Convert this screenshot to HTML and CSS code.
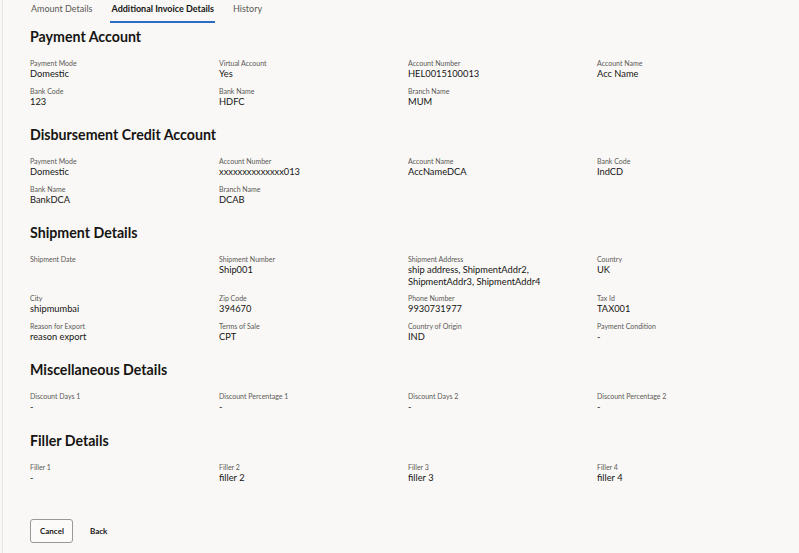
FILE: index.html
```html
<!DOCTYPE html>
<html lang="en">
<head>
    <meta charset="UTF-8">
    <meta name="viewport" content="width=device-width, initial-scale=1.0">
    <title>Invoice Details</title>
    <link rel="stylesheet" href="styles.css">
</head>
<body>
<div class="page">
    <div class="tabs">
        <a class="tab">Amount Details</a>
        <a class="tab active">Additional Invoice Details</a>
        <a class="tab">History</a>
    </div>

    <!-- Payment account -->
    <section class="section">
        <h2>Payment Account</h2>
        <div class="grid">
            <div class="field"><span class="label">Payment Mode</span><span class="value">Domestic</span></div>
            <div class="field"><span class="label">Virtual Account</span><span class="value">Yes</span></div>
            <div class="field"><span class="label">Account Number</span><span class="value">HEL0015100013</span></div>
            <div class="field"><span class="label">Account Name</span><span class="value">Acc Name</span></div>
            <div class="field"><span class="label">Bank Code</span><span class="value">123</span></div>
            <div class="field"><span class="label">Bank Name</span><span class="value">HDFC</span></div>
            <div class="field"><span class="label">Branch Name</span><span class="value">MUM</span></div>
        </div>
    </section>

    <!-- Disbursement credit account -->
    <section class="section">
        <h2>Disbursement Credit Account</h2>
        <div class="grid">
            <div class="field"><span class="label">Payment Mode</span><span class="value">Domestic</span></div>
            <div class="field"><span class="label">Account Number</span><span class="value">xxxxxxxxxxxxxx013</span></div>
            <div class="field"><span class="label">Account Name</span><span class="value">AccNameDCA</span></div>
            <div class="field"><span class="label">Bank Code</span><span class="value">IndCD</span></div>
            <div class="field"><span class="label">Bank Name</span><span class="value">BankDCA</span></div>
            <div class="field"><span class="label">Branch Name</span><span class="value">DCAB</span></div>
        </div>
    </section>

    <!-- Shipment -->
    <section class="section">
        <h2>Shipment Details</h2>
        <div class="grid">
            <div class="field"><span class="label">Shipment Date</span><span class="value"></span></div>
            <div class="field"><span class="label">Shipment Number</span><span class="value">Ship001</span></div>
            <div class="field"><span class="label">Shipment Address</span><span class="value">ship address, ShipmentAddr2, ShipmentAddr3, ShipmentAddr4</span></div>
            <div class="field"><span class="label">Country</span><span class="value">UK</span></div>
            <div class="field"><span class="label">City</span><span class="value">shipmumbai</span></div>
            <div class="field"><span class="label">Zip Code</span><span class="value">394670</span></div>
            <div class="field"><span class="label">Phone Number</span><span class="value">9930731977</span></div>
            <div class="field"><span class="label">Tax Id</span><span class="value">TAX001</span></div>
            <div class="field"><span class="label">Reason for Export</span><span class="value">reason export</span></div>
            <div class="field"><span class="label">Terms of Sale</span><span class="value">CPT</span></div>
            <div class="field"><span class="label">Country of Origin</span><span class="value">IND</span></div>
            <div class="field"><span class="label">Payment Condition</span><span class="value">-</span></div>
        </div>
    </section>

    <!-- Misc -->
    <section class="section">
        <h2>Miscellaneous Details</h2>
        <div class="grid">
            <div class="field"><span class="label">Discount Days 1</span><span class="value">-</span></div>
            <div class="field"><span class="label">Discount Percentage 1</span><span class="value">-</span></div>
            <div class="field"><span class="label">Discount Days 2</span><span class="value">-</span></div>
            <div class="field"><span class="label">Discount Percentage 2</span><span class="value">-</span></div>
        </div>
    </section>

    <!-- Fillers -->
    <section class="section">
        <h2>Filler Details</h2>
        <div class="grid">
            <div class="field"><span class="label">Filler 1</span><span class="value">-</span></div>
            <div class="field"><span class="label">Filler 2</span><span class="value">filler 2</span></div>
            <div class="field"><span class="label">Filler 3</span><span class="value">filler 3</span></div>
            <div class="field"><span class="label">Filler 4</span><span class="value">filler 4</span></div>
        </div>
    </section>

    <div class="actions">
        <button type="button" class="btn btn-outline">Cancel</button>
        <button type="button" class="btn btn-text">Back</button>
    </div>
</div>
</body>
</html>
```

FILE: styles.css
```css
html, body {
    margin: 0;
    background-color: #f9f8f6;
}

body {
    font-family: Lato, "Noto Sans", sans-serif;
    color: #161513;
}

.page {
    margin-left: 2px;
    border-left: 1px solid #e6e4e1;
    padding: 0 13px 10px 27px;
    min-height: 543px;
}

/* tab bar */
.tabs {
    display: flex;
    gap: 17px;
    height: 23px;
}

.tab {
    font-size: 9px;
    line-height: 17px;
    color: #5b5855;
    padding: 0 1px;
    border-bottom: 2px solid transparent;
    box-sizing: border-box;
    height: 23px;
}

.tab.active {
    color: #161513;
    font-weight: 700;
    border-bottom-color: #2a6dc4;
}

/* sections */
.section {
    margin-top: 5px;
}

.section + .section {
    margin-top: 19px;
}

h2 {
    margin: 0 0 13px;
    font-size: 14.2px;
    line-height: 18px;
    font-weight: 700;
}

.grid {
    display: grid;
    grid-template-columns: repeat(4, 189px);
    row-gap: 7px;
}

.field {
    display: flex;
    flex-direction: column;
}

.label {
    font-size: 7px;
    line-height: 9px;
    color: #5b5855;
}

.value {
    font-size: 9.3px;
    line-height: 11.5px;
    min-height: 11px;
    padding-right: 30px;
}

/* buttons */
.actions {
    display: flex;
    gap: 8px;
    margin-top: 36px;
}

.btn {
    font-family: inherit;
    font-size: 8px;
    font-weight: 700;
    color: #161513;
    height: 24px;
    padding: 0 9px;
    cursor: pointer;
}

.btn-outline {
    background-color: #fcfbfa;
    border: 1px solid #9c9894;
    border-radius: 3px;
    width: 43px;
}

.btn-text {
    background: none;
    border: none;
}
```
